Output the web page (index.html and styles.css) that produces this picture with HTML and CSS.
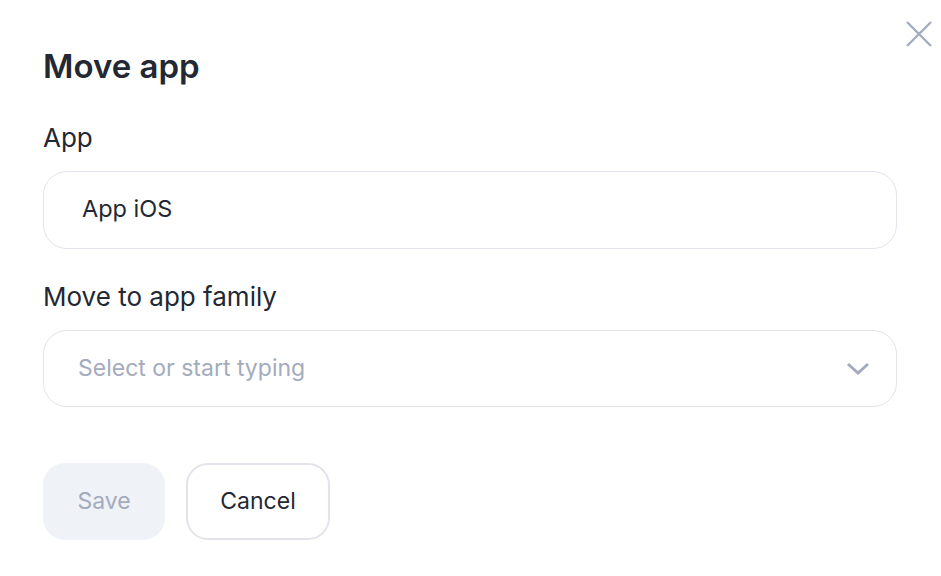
FILE: index.html
```html
<!DOCTYPE html>
<html lang="en">
<head>
<meta charset="utf-8">
<title>Move app</title>
<link rel="stylesheet" href="styles.css">
</head>
<body>
<div class="modal">
  <button class="close" aria-label="Close">
    <svg width="28" height="28" viewBox="0 0 28 28"><path d="M2 2L26 26M26 2L2 26" stroke="#a3adbf" stroke-width="2.4" stroke-linecap="butt" fill="none"/></svg>
  </button>
  <h1 class="title">Move app</h1>
  <div class="field">
    <label class="label">App</label>
    <div class="input">App iOS</div>
  </div>
  <div class="field">
    <label class="label">Move to app family</label>
    <div class="input select">
      <span class="placeholder">Select or start typing</span>
      <svg class="chev" width="24" height="14" viewBox="0 0 24 14"><path d="M2 2L12 11L22 2" stroke="#a3abbd" stroke-width="3" fill="none"/></svg>
    </div>
  </div>
  <div class="actions">
    <button class="btn save">Save</button>
    <button class="btn cancel">Cancel</button>
  </div>
</div>
</body>
</html>
```
FILE: styles.css
```css
html, body {
  margin: 0;
  padding: 0;
  background: #ffffff;
}
body {
  font-family: Inter, "Open Sans", sans-serif;
  color: #222834;
}
.modal {
  position: relative;
  width: 941px;
  height: 576px;
  box-sizing: border-box;
  padding: 44px 44px 0 43px;
}
.close {
  position: absolute;
  top: 20px;
  right: 8px;
  width: 28px;
  height: 28px;
  padding: 0;
  border: 0;
  background: transparent;
  display: flex;
}
.title {
  margin: 0;
  font-size: 33px;
  line-height: 44px;
  font-weight: 600;
  color: #222834;
}
.field {
  display: flex;
  flex-direction: column;
}
.label {
  font-size: 26px;
  line-height: 32px;
  margin-top: 34px;
  margin-bottom: 17px;
}
.field + .field .label {
  margin-top: 32px;
}
.input {
  height: 78px;
  box-sizing: border-box;
  border: 1px solid #e3e3ec;
  border-radius: 24px;
  display: flex;
  align-items: center;
  padding: 0 38px 3px;
  font-size: 23.5px;
}
.select {
  height: 77px;
  padding: 0 26px 2px 34px;
  justify-content: space-between;
}
.chev {
  margin-top: 2px;
}
.placeholder {
  color: #a3abbd;
  font-size: 23px;
}
.actions {
  display: flex;
  gap: 21px;
  margin-top: 56px;
}
.btn {
  height: 77px;
  border-radius: 22px;
  font-family: inherit;
  font-size: 23px;
  padding: 0 0 2px;
}
.save {
  width: 122px;
  background: #eff2f7;
  border: 0;
  color: #a3abbd;
}
.cancel {
  width: 144px;
  background: #ffffff;
  border: 2px solid #e3e3ec;
  color: #222834;
}
```
